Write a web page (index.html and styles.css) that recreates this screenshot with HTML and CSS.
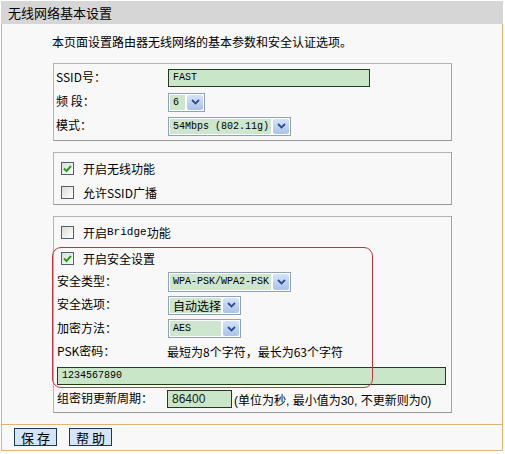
FILE: index.html
```html
<!DOCTYPE html>
<html lang="zh-CN">
<head>
    <meta charset="UTF-8">
    <title>无线网络基本设置</title>
    <link rel="stylesheet" href="styles.css">
</head>
<body>

<div class="page">
    <div class="title">无线网络基本设置</div>

    <div class="panel">
        <div class="content">
            <p class="intro">本页面设置路由器无线网络的基本参数和安全认证选项。</p>

            <div class="box basic">
                <div class="row">
                    <span class="label">SSID号：</span>
                    <span class="input ssid">FAST</span>
                </div>
                <div class="row">
                    <span class="label">频 段：</span>
                    <span class="select w-channel"><span class="value">6</span><span class="arrow"><svg width="9" height="6" viewBox="0 0 9 6"><path d="M1 1 L4.5 4.5 L8 1" fill="none" stroke="#2c4f8c" stroke-width="1.8"/></svg></span></span>
                </div>
                <div class="row">
                    <span class="label">模式：</span>
                    <span class="select w-long"><span class="value">54Mbps (802.11g)</span><span class="arrow"><svg width="9" height="6" viewBox="0 0 9 6"><path d="M1 1 L4.5 4.5 L8 1" fill="none" stroke="#2c4f8c" stroke-width="1.8"/></svg></span></span>
                </div>
            </div>

            <div class="box switches">
                <div class="check-row">
                    <span class="checkbox"><svg width="11" height="11" viewBox="0 0 11 11"><path d="M2 5.5 L4.5 8 L9 3" fill="none" stroke="#23a023" stroke-width="2"/></svg></span>开启无线功能
                </div>
                <div class="check-row">
                    <span class="checkbox"></span>允许SSID广播
                </div>
            </div>

            <div class="box security">
                <div class="outline"></div>

                <div class="check-row">
                    <span class="checkbox"></span>开启<span class="latin">Bridge</span>功能
                </div>
                <div class="check-row gap">
                    <span class="checkbox"><svg width="11" height="11" viewBox="0 0 11 11"><path d="M2 5.5 L4.5 8 L9 3" fill="none" stroke="#23a023" stroke-width="2"/></svg></span>开启安全设置
                </div>
                <div class="row tight">
                    <span class="label">安全类型：</span>
                    <span class="select w-long tall"><span class="value">WPA-PSK/WPA2-PSK</span><span class="arrow"><svg width="9" height="6" viewBox="0 0 9 6"><path d="M1 1 L4.5 4.5 L8 1" fill="none" stroke="#2c4f8c" stroke-width="1.8"/></svg></span></span>
                </div>
                <div class="row tight">
                    <span class="label">安全选项：</span>
                    <span class="select w-short"><span class="value cjk">自动选择</span><span class="arrow"><svg width="9" height="6" viewBox="0 0 9 6"><path d="M1 1 L4.5 4.5 L8 1" fill="none" stroke="#2c4f8c" stroke-width="1.8"/></svg></span></span>
                </div>
                <div class="row tight">
                    <span class="label">加密方法：</span>
                    <span class="select w-short"><span class="value">AES</span><span class="arrow"><svg width="9" height="6" viewBox="0 0 9 6"><path d="M1 1 L4.5 4.5 L8 1" fill="none" stroke="#2c4f8c" stroke-width="1.8"/></svg></span></span>
                </div>
                <div class="row tight">
                    <span class="label">PSK密码：</span>
                    <span class="hint">最短为8个字符，最长为63个字符</span>
                </div>
                <div class="row tight single">
                    <span class="input psk">1234567890</span>
                </div>
                <div class="row tight">
                    <span class="label">组密钥更新周期：</span>
                    <span class="field"><span class="input period">86400</span><span class="note">(单位为秒, 最小值为30, 不更新则为0)</span></span>
                </div>
            </div>
        </div>

        <div class="actions">
            <button>保 存</button>
            <button>帮 助</button>
        </div>
    </div>
</div>

</body>
</html>
```

FILE: styles.css
```css
body {
    margin: 0;
    background-color: #ffffff;
    font-family: "Noto Sans CJK SC", sans-serif;
    font-size: 12px;
    color: #000000;
}

.page {
    width: 502px;
    margin-left: 1px;
}

.title {
    margin-top: 1px;
    height: 23px;
    line-height: 23px;
    padding-left: 7px;
    background-color: #d6d6d6;
    font-size: 13px;
}

.panel {
    border: 1px solid #e3b372;
    border-top: none;
    background-color: #f8f8f8;
}

.content {
    padding: 9px 0 11px 0;
}

.intro {
    margin: 0 0 12px 50px;
    line-height: 18px;
}

.box {
    width: 399px;
    margin-left: 51px;
    box-sizing: border-box;
    border: 1px solid #b4b4b4;
    border-bottom-color: #9a9a9a;
    border-right-color: #a4a4a4;
}

.box + .box {
    margin-top: 11px;
}

.basic {
    padding: 2px 0;
}

.switches {
    padding-top: 3px;
}

.security {
    position: relative;
    padding: 3px 0 1px 0;
}

/* red highlight drawn over the security settings */
.outline {
    position: absolute;
    left: -2px;
    top: 30px;
    width: 321px;
    height: 141px;
    box-sizing: border-box;
    border: 1px solid #c8323f;
    border-radius: 9px;
    pointer-events: none;
}

.row {
    display: grid;
    grid-template-columns: 112px auto;
    align-items: center;
    justify-items: start;
    height: 24px;
    padding-left: 2px;
}

.row.tight {
    height: 23.5px;
    padding-left: 3px;
    grid-template-columns: 111px auto;
}

.row.single {
    grid-template-columns: auto;
}

.label {
    padding-bottom: 3px;
}

.check-row {
    display: flex;
    align-items: center;
    height: 24px;
    padding-left: 7px;
}

.check-row.gap {
    margin-top: 2px;
}

.latin {
    font-family: "Liberation Mono", monospace;
    font-size: 11px;
}

.checkbox {
    display: flex;
    align-items: center;
    justify-content: center;
    width: 13px;
    height: 13px;
    box-sizing: border-box;
    margin-right: 9px;
    border: 1px solid #4a6278;
    background: linear-gradient(135deg, #dcdcd6, #ffffff);
}

.input {
    display: block;
    height: 18px;
    line-height: 16px;
    box-sizing: border-box;
    padding-left: 4px;
    border: 1px solid #223a22;
    background-color: #c9e6c9;
    font-family: "Liberation Mono", monospace;
    font-size: 10px;
}

.ssid {
    width: 202px;
}

.psk {
    width: 389px;
    margin-top: 1px;
}

.period {
    width: 65px;
    font-family: "Liberation Sans", sans-serif;
    font-size: 12px;
    color: #1a1a1a;
}

.field {
    display: flex;
    align-items: center;
    margin-left: -1px;
}

.note {
    margin-left: 2px;
    font-family: "Liberation Sans", "Noto Sans CJK SC", sans-serif;
    font-size: 12px;
}

.hint {
    margin-left: -1px;
    padding-bottom: 2px;
}

.select {
    display: flex;
    height: 19px;
    box-sizing: border-box;
    padding: 1px;
    border: 1px solid #8fa2b6;
    background-color: #ffffff;
}

.select.tall {
    height: 20px;
}

.select .value {
    flex: 1;
    padding-left: 3px;
    line-height: 15px;
    background-color: #cde6cd;
    font-family: "Liberation Mono", monospace;
    font-size: 10px;
}

.select .value.cjk {
    font-family: "Noto Sans CJK SC", sans-serif;
    font-size: 12px;
}

.select .arrow {
    display: flex;
    align-items: center;
    justify-content: center;
    width: 16px;
    margin-left: 2px;
    border-radius: 2px;
    background: linear-gradient(#d4e3fa, #aac3ea);
}

.w-channel {
    width: 37px;
}

.w-long {
    width: 123px;
}

.w-short {
    width: 73px;
}

.actions {
    display: flex;
    gap: 12px;
    padding: 3px 0 4px 12px;
    border-top: 1px solid #e3b372;
}

button {
    width: 43px;
    height: 18px;
    padding: 0;
    border: 1px solid #1d3753;
    background-color: #d3e5f9;
    font-family: "Noto Sans CJK SC", sans-serif;
    font-size: 13px;
    line-height: 15px;
    color: #000000;
}
```
